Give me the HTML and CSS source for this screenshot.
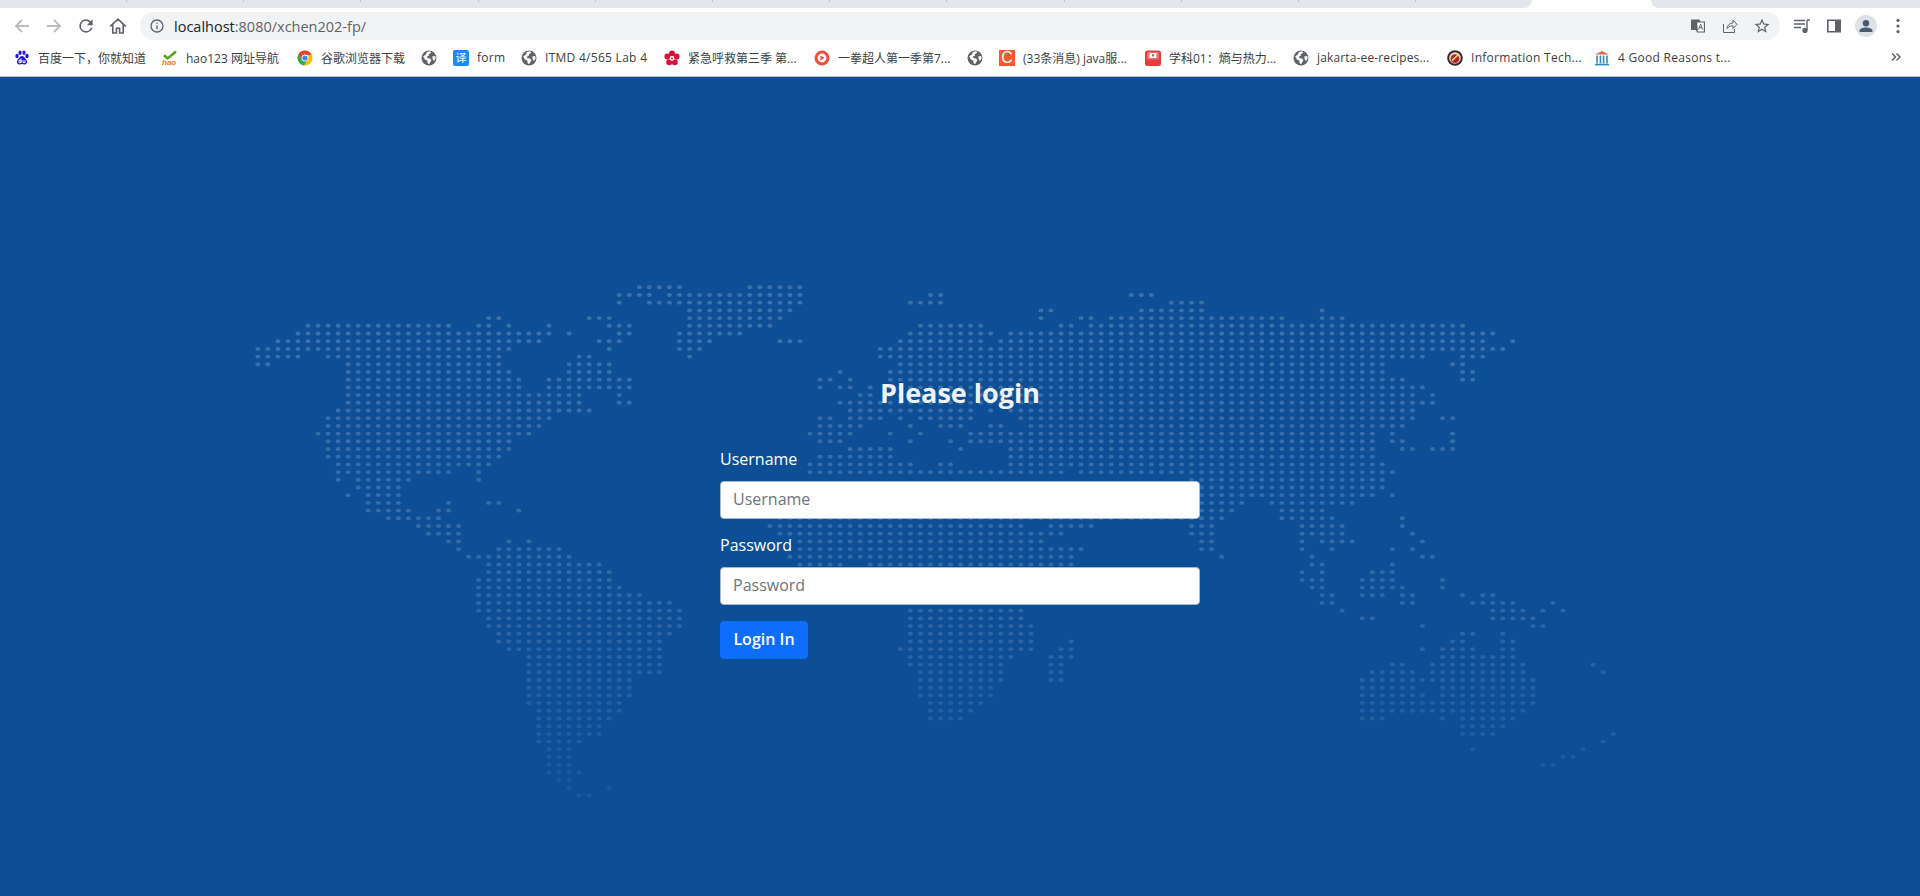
FILE: index.html
```html
<!DOCTYPE html>
<html lang="en">
<head>
<meta charset="utf-8">
<title>Login</title>
<link rel="stylesheet" href="styles.css">
</head>
<body>
<svg class="defs" width="0" height="0" aria-hidden="true">
  <symbol id="globe" viewBox="0 0 16 16">
    <circle cx="8" cy="8" r="7.5" fill="#5f6368"/>
    <path d="M2.2 6.2 5 4.6l.8-2.6 3.4-.8 1 1.6-2.2 1.4-.4 1.8-1.8.4.6 1.6 2.6.6 1.4 1.6-1.2 2-1 1.8-1.4-.4-.6-3-2.4-1.2zM11.2 6.4l3-.4.4 2.4-1.6 2.6-1.2-1.6z" fill="#fff"/>
  </symbol>
</svg>

<header class="chrome">
  <div class="tabstrip">
    <span class="tab tab-first"></span><span class="tab"></span><span class="tab"></span><span class="tab"></span><span class="tab"></span><span class="tab"></span><span class="tab"></span><span class="tab"></span><span class="tab"></span><span class="tab"></span><span class="tab"></span><span class="tab"></span><span class="tab tab-last"></span>
    <span class="tab-active"></span>
    <span class="tab-after"></span>
  </div>

  <div class="toolbar">
    <span class="tbtn"><svg class="i16" viewBox="0 0 16 16"><path class="line-off" d="M15 8H2M8 2 2 8l6 6"/></svg></span>
    <span class="tbtn"><svg class="i16" viewBox="0 0 16 16"><path class="line-off" d="M1 8h13M8 2l6 6-6 6"/></svg></span>
    <span class="tbtn"><svg class="i20" viewBox="0 0 24 24"><path class="fill-icon" d="M17.65 6.35A7.96 7.96 0 0 0 12 4a8 8 0 1 0 7.73 10h-2.08A6 6 0 1 1 12 6c1.66 0 3.14.69 4.22 1.78L13 11h7V4l-2.35 2.35z"/></svg></span>
    <span class="tbtn"><svg class="i18" viewBox="0 0 18 18"><path class="line-icon" d="M1.2 9.4 9 2.2l7.8 7.2M3.8 7.4V16h3.6v-4.8h3.2V16h3.6V7.4"/></svg></span>

    <div class="omnibox">
      <svg class="i16 info" viewBox="0 0 24 24"><path class="fill-icon" d="M11 7h2v2h-2zm0 4h2v6h-2zm1-9a10 10 0 1 0 0 20 10 10 0 0 0 0-20zm0 18a8 8 0 1 1 0-16 8 8 0 0 1 0 16z"/></svg>
      <span class="url"><span class="url-host">localhost</span>:8080/xchen202-fp/</span>
      <span class="omni-actions">
        <span class="tbtn"><svg class="i16" viewBox="0 0 16 16"><path class="fill-icon" d="M1 1.5h8.5l1 2H15v11H7l-1-2.5H1z"/><path class="fill-white" d="M7.2 4.6h6.6v8.8H7.9z"/><path class="line-thin" d="M8.6 11.6 10.6 6l2 5.6M9.3 9.8h2.6M3 5h4M5 3.6V5M3.4 9.4C5 8.6 6 7 6.2 5M3.6 6.4c.6 1.4 1.6 2.4 3 3"/></svg></span>
        <span class="tbtn"><svg class="i16" viewBox="0 0 16 16"><path class="line-thin" d="M1.5 6v8.5h11V11M5 10.6C5.4 7 8 5 11 5V2l4 4.4-4 4.2V7.8C8.5 7.8 6.4 8.6 5 10.6z"/></svg></span>
        <span class="tbtn"><svg class="i18" viewBox="0 0 24 24"><path class="fill-icon" d="M22 9.24l-7.19-.62L12 2 9.19 8.63 2 9.24l5.46 4.73L5.82 21 12 17.27 18.18 21l-1.63-7.03L22 9.24zM12 15.4l-3.76 2.27 1-4.28-3.32-2.88 4.38-.38L12 6.1l1.71 4.04 4.38.38-3.32 2.88 1 4.28L12 15.4z"/></svg></span>
      </span>
    </div>

    <span class="tbtn"><svg class="i16" viewBox="0 0 16 16"><path class="line-icon line-14" d="M0 2.5h11M0 6h11M0 9.5h7M13 2v10"/><path class="line-icon line-14" d="M13 2h3"/><circle class="fill-icon" cx="11" cy="12.4" r="2.6"/></svg></span>
    <span class="tbtn"><svg class="i16" viewBox="0 0 16 16"><path class="fill-icon" d="M1 1.5h14v13H1zM2.6 3v10H9V3z"/></svg></span>
    <span class="tbtn"><span class="avatar"><svg class="i16" viewBox="0 0 16 16"><circle class="fill-slate" cx="8" cy="5.2" r="3.2"/><path class="fill-slate" d="M1.6 14v-1.4C1.6 10.6 5 9.6 8 9.6s6.4 1 6.4 3V14z"/></svg></span></span>
    <span class="tbtn"><svg class="i16" viewBox="0 0 16 16"><circle class="fill-icon" cx="8" cy="2.4" r="1.6"/><circle class="fill-icon" cx="8" cy="8" r="1.6"/><circle class="fill-icon" cx="8" cy="13.6" r="1.6"/></svg></span>
  </div>

  <nav class="bookmarks">
    <a class="bm"><svg class="i16" viewBox="0 0 16 16"><g class="fill-baidu"><ellipse cx="3" cy="6" rx="1.7" ry="2.2"/><ellipse cx="6" cy="2.8" rx="1.6" ry="2.2"/><ellipse cx="10" cy="2.8" rx="1.6" ry="2.2"/><ellipse cx="13" cy="6" rx="1.7" ry="2.2"/><path d="M8 6c2 0 2.6 2 4.2 3.4 1.6 1.6 1 4.8-1.4 5-1.2.1-1.8-.4-2.8-.4s-1.6.5-2.8.4c-2.4-.2-3-3.4-1.4-5C5.4 8 6 6 8 6z"/></g><path class="line-white" d="M5 10.2v2.4H7v-2.4zM7 8.6v4M9 10.2v2.4h2v-2.4"/></svg><span class="bm-text w108">百度一下，你就知道</span></a>
    <a class="bm"><svg class="i16" viewBox="0 0 16 16"><path class="line-green" d="M2 5.2 5.6 8.4 14 1.4"/><text class="hao" x="0" y="15">hao</text></svg><span class="bm-text w95">hao123 网址导航</span></a>
    <a class="bm"><svg class="i16" viewBox="0 0 16 16"><circle cx="8" cy="8" r="7.5" fill="#fbbc04"/><path d="M8 .5a7.5 7.5 0 0 0-6.5 3.75L5 10.5 8 5h6.5A7.5 7.5 0 0 0 8 .5z" fill="#ea4335"/><path d="M1.5 4.25A7.5 7.5 0 0 0 7 15.44L10.7 9.6 5 10.5z" fill="#34a853"/><circle cx="8" cy="8" r="3.4" fill="#fff"/><circle cx="8" cy="8" r="2.6" fill="#4285f4"/></svg><span class="bm-text w84">谷歌浏览器下载</span></a>
    <a class="bm"><svg class="i16"><use href="#globe"/></svg></a>
    <a class="bm"><span class="tile tile-yi">译</span><span class="bm-text latin w28">form</span></a>
    <a class="bm"><svg class="i16"><use href="#globe"/></svg><span class="bm-text latin w103">ITMD 4/565 Lab 4</span></a>
    <a class="bm"><svg class="i16" viewBox="0 0 16 16"><g fill="#dc0f36"><circle cx="8" cy="3.4" r="3"/><circle cx="12.6" cy="6.6" r="3"/><circle cx="10.8" cy="12.2" r="3"/><circle cx="5.2" cy="12.2" r="3"/><circle cx="3.4" cy="6.6" r="3"/></g><circle cx="8" cy="8.4" r="2.3" fill="#fff"/><circle cx="8" cy="8.4" r="1" fill="#dc0f36"/></svg><span class="bm-text w110">紧急呼救第三季 第...</span></a>
    <a class="bm"><svg class="i16" viewBox="0 0 16 16"><circle cx="8" cy="8" r="7.5" fill="#f0513f"/><circle cx="8" cy="8" r="4.4" fill="#fff"/><path d="M6.4 5.6 10.6 8l-4.2 2.4z" fill="#f0513f"/></svg><span class="bm-text w113">一拳超人第一季第7...</span></a>
    <a class="bm"><svg class="i16"><use href="#globe"/></svg></a>
    <a class="bm"><span class="tile tile-c">C</span><span class="bm-text w106">(33条消息) java服...</span></a>
    <a class="bm"><svg class="i16" viewBox="0 0 16 16"><rect y=".5" width="16" height="15.5" rx="2.5" fill="#e3403d"/><rect x="2" y="2" width="12" height="7.6" rx="1" fill="#f3706c"/><rect x="4.6" y="3" width="6.8" height="5" fill="#fff"/><rect x="7" y="4.4" width="2" height="2" fill="#e3403d"/></svg><span class="bm-text w108">学科01：熵与热力...</span></a>
    <a class="bm"><svg class="i16"><use href="#globe"/></svg><span class="bm-text latin-tight w114">jakarta-ee-recipes...</span></a>
    <a class="bm"><svg class="i16" viewBox="0 0 16 16"><circle cx="8" cy="8" r="7.8" fill="#3a2a2a"/><circle cx="8" cy="8" r="5.8" fill="#e6e0d8"/><circle cx="8" cy="8.6" r="4.4" fill="#b5202c"/><path d="M5 10.6 11.4 4.6" stroke="#f4d24c" stroke-width="1.6"/></svg><span class="bm-text latin w107">Information Tech...</span></a>
    <a class="bm"><svg class="i16" viewBox="0 0 16 16"><path d="M1 4.4 8 1l7 3.4z" fill="#e0694a"/><path d="M3 5.4v8M6.4 5.4v8M9.6 5.4v8M13 5.4v8" stroke="#2f8cb8" stroke-width="1.6"/><path d="M1 14.6h14" stroke="#2f8cb8" stroke-width="1.6"/></svg><span class="bm-text latin w110">4 Good Reasons t...</span></a>
    <svg class="more" viewBox="0 0 10 10"><path d="M1 1.5 4.5 5 1 8.5M5.5 1.5 9 5 5.5 8.5"/></svg>
  </nav>
</header>

<main class="stage">
  <svg class="map" viewBox="-7.77 -9.48 1394.4 701.3" preserveAspectRatio="none" aria-hidden="true">
    <defs>
      <linearGradient id="fade" gradientUnits="userSpaceOnUse" x1="0" y1="0" x2="0" y2="660">
        <stop offset="0" stop-color="#fff" stop-opacity=".19"/>
        <stop offset=".55" stop-color="#fff" stop-opacity=".15"/>
        <stop offset=".85" stop-color="#fff" stop-opacity=".09"/>
        <stop offset="1" stop-color="#fff" stop-opacity=".05"/>
      </linearGradient>
    </defs>
    <path class="dots" d="M380 0H421M490 0H541M360 10H391M410 10H541M670 10H681M870 10H891M360 20h1M390 20H541M650 20H681M910 20H941M430 30H531M780 30H791M880 30H941M1060 30h1M230 40H241M330 40H351M430 40H521M780 40h1M820 40H831M850 40H1021M1060 40H1081M50 50H191M220 50H231M250 50h1M290 50h1M350 50H371M430 50H511M660 50H721M800 50H811M830 50H1201M40 60H291M310 60h1M360 60H371M420 60H481M650 60H731M750 60H1231M20 70H281M340 70H361M420 70H451M520 70H541M640 70H721M740 70H1221M1250 70h1M0 80H251M350 80h1M420 80H441M620 80H1241M0 90H41M70 90H241M320 90H331M430 90h1M620 90H1161M1200 90H1221M0 100H11M90 100H241M310 100H351M640 100H1121M1190 100H1201M90 110H251M310 110H351M580 110h1M630 110H1121M1200 110H1211M90 120H261M290 120H371M560 120H571M590 120h1M630 120H1141M1200 120H1211M90 130H261M290 130H371M560 130h1M580 130H591M610 130h1M630 130H1161M90 140H321M360 140h1M600 140H611M630 140H1151M1170 140h1M90 150H321M360 150H371M580 150H1171M80 160H331M590 160H711M730 160h1M750 160H1151M70 170H291M560 170H571M590 170H621M640 170h1M660 170H711M760 170H1151M1180 170H1191M70 180H281M560 180H601M650 180h1M680 180H701M730 180H741M770 180H1141M60 190H271M550 190H591M630 190h1M660 190h1M710 190H1111M1130 190h1M1190 190h1M70 200H251M560 200H581M650 200h1M690 200h1M710 200H1111M1130 200H1141M1190 200h1M70 210H251M590 210H631M700 210h1M750 210H1111M1140 210H1151M1170 210H1191M70 220H241M560 220H631M750 220H1111M80 230H231M550 230H651M680 230H691M750 230H1121M80 240H191M220 240h1M550 240H801M820 240H1131M80 250h1M100 250H151M220 250h1M930 250H1121M100 260H141M930 260H1121M90 270h1M110 270H141M930 270H1111M1130 270h1M110 280H141M190 280h1M230 280H241M940 280H981M1010 280H1091M110 290H151M180 290H191M260 290h1M940 290H971M1020 290H1061M130 300H181M520 300H961M1020 300H1071M1140 300h1M160 310H201M510 310H761M790 310H831M930 310H951M1040 310H1081M1140 310h1M170 320H201M520 320H801M930 320H951M1040 320H1081M1150 320h1M190 330H201M250 330h1M270 330h1M540 330H781M940 330H951M1040 330h1M1060 330H1091M1160 330h1M200 340h1M240 340H301M540 340H821M940 340H951M1040 340h1M1070 340h1M1130 340h1M1150 340h1M210 350H311M530 350H811M960 350h1M1050 350h1M1160 350H1171M230 360H341M540 360H581M610 360H811M1050 360H1061M1130 360h1M230 370H351M1040 370h1M1060 370h1M1110 370H1131M220 380H351M1040 380H1061M1100 380H1131M1180 380h1M220 390H361M1050 390H1061M1100 390H1141M1180 390h1M220 400H381M1060 400H1071M1100 400H1121M1140 400H1151M1200 400h1M1220 400H1231M220 410H411M1060 410H1071M1140 410H1151M1210 410H1251M1290 410h1M220 420H421M650 420H761M1080 420h1M1230 420H1261M1280 420h1M1300 420h1M230 430H421M650 430H761M1100 430H1111M1230 430H1271M230 440H421M650 440H771M1160 440h1M1270 440H1281M240 450H411M650 450H771M1200 450H1211M1240 450h1M240 460H401M650 460H771M810 460h1M1190 460H1201M1240 460H1251M250 470H401M640 470H771M800 470H811M1160 470h1M1180 470H1211M1240 470H1251M270 480H401M650 480H751M790 480H811M1180 480H1251M270 490H401M650 490H741M790 490H801M1130 490H1141M1170 490H1261M1330 490h1M270 500H401M660 500H741M790 500H801M1110 500H1151M1170 500H1261M1340 500h1M270 510H371M660 510H741M790 510H801M1100 510H1271M270 520H371M660 520H731M1100 520H1151M1180 520H1271M270 530H371M660 530H731M1100 530H1161M1180 530H1271M270 540H361M670 540H721M1100 540H1271M280 550H361M670 550H711M1100 550H1261M280 560H351M670 560H701M1100 560H1121M1180 560h1M1200 560H1251M280 570H341M1200 570H1241M280 580H341M1200 580H1231M1350 580h1M280 590H321M1340 590h1M290 600H311M1210 600h1M1320 600h1M290 610H311M1300 610H1311M290 620H311M1280 620H1291M290 630H321M300 640H311M310 650h1M350 650h1M320 660H331"/>
  </svg>

  <form class="login">
    <h3 class="login-title">Please login</h3>
    <div class="field">
      <label class="field-label" for="username">Username</label>
      <input class="field-input" id="username" type="text" placeholder="Username">
    </div>
    <div class="field">
      <label class="field-label" for="password">Password</label>
      <input class="field-input" id="password" type="password" placeholder="Password">
    </div>
    <button class="btn" type="button">Login In</button>
  </form>
</main>
</body>
</html>
```

FILE: styles.css
```css
* { box-sizing: border-box; }

html, body {
  margin: 0;
  height: 100%;
}

body {
  display: flex;
  flex-direction: column;
  overflow: hidden;
  font-family: "Open Sans", "Noto Sans CJK SC", sans-serif;
  background: #0d4f97;
}

.defs { position: absolute; }

.i16 { width: 16px; height: 16px; flex: none; display: block; }
.i18 { width: 18px; height: 18px; flex: none; display: block; }
.i20 { width: 20px; height: 20px; flex: none; display: block; }

.line-off { fill: none; stroke: #b9bbbe; stroke-width: 1.8; }
.line-icon { fill: none; stroke: #5f6368; stroke-width: 1.6; }
.line-14 { stroke-width: 1.4; }
.line-thin { fill: none; stroke: #5f6368; stroke-width: 1; }
.line-white { fill: none; stroke: #fff; stroke-width: 1; }
.line-green { fill: none; stroke: #58a618; stroke-width: 2.6; }
.fill-icon { fill: #5f6368; }
.fill-white { fill: #fff; }
.fill-slate { fill: #4a5a70; }
.fill-baidu { fill: #2319dc; }
.hao { font: italic 700 8px "Liberation Sans", sans-serif; fill: #f07a13; }

/* browser chrome */
.chrome { flex: none; background: #fff; }

.tabstrip {
  display: flex;
  height: 8px;
  background: #fff;
}
.tab {
  flex: none;
  width: 117.2px;
  height: 8px;
  background: linear-gradient(#bfc2c6 0 2px, #e3e6ea 2px);
  background-size: 1px 100%;
  background-repeat: no-repeat;
  background-position: right top;
  background-color: #e3e6ea;
}
.tab-first { width: 127px; }
.tab-last { width: 116px; border-bottom-right-radius: 8px; background-image: none; }
.tab-active { flex: none; width: 119px; }
.tab-after {
  flex: 1;
  background: #e3e6ea;
  border-bottom-left-radius: 8px;
}

.toolbar {
  display: flex;
  align-items: center;
  height: 32px;
  padding: 4px 6px 0;
}
.tbtn {
  flex: none;
  width: 32px;
  height: 28px;
  display: flex;
  align-items: center;
  justify-content: center;
}
.omnibox {
  flex: 1;
  height: 28px;
  margin: 0 6px;
  padding: 0 2px 0 9px;
  display: flex;
  align-items: center;
  gap: 9px;
  background: #f1f3f4;
  border-radius: 14px;
}
.url {
  flex: 1;
  font-size: 14.5px;
  color: #5f6368;
  white-space: nowrap;
}
.url-host { color: #202124; }
.omni-actions { display: flex; }
.avatar {
  width: 22px;
  height: 22px;
  border-radius: 50%;
  background: #dee1e6;
  display: flex;
  align-items: center;
  justify-content: center;
}

.bookmarks {
  display: flex;
  align-items: center;
  height: 37px;
  padding: 0 6px 1px;
  border-bottom: 1px solid #b9c3d0;
  position: relative;
}
.bm {
  flex: none;
  display: flex;
  align-items: center;
  gap: 8px;
  padding: 0 8px;
  font-size: 12px;
  color: #3c4043;
  white-space: nowrap;
}
.bm-text { display: block; }
.latin { letter-spacing: .28px; }
.latin-tight { letter-spacing: .14px; }
.w28 { width: 28px; }
.w84 { width: 84px; }
.w95 { width: 95px; }
.w103 { width: 103px; }
.w106 { width: 106px; }
.w107 { width: 107px; }
.w108 { width: 108px; }
.w110 { width: 110px; }
.w113 { width: 113px; }
.w114 { width: 114px; }

.tile {
  flex: none;
  width: 16px;
  height: 16px;
  display: flex;
  align-items: center;
  justify-content: center;
  color: #fff;
  line-height: 1;
}
.tile-yi { background: #1a8cf5; border-radius: 2px; font-size: 11px; }
.tile-c { background: #fc5531; font: 400 16px "Liberation Sans", sans-serif; }

.more {
  width: 10px;
  height: 10px;
  position: absolute;
  left: 1891px;
  top: 12px;
  fill: none;
  stroke: #5f6368;
  stroke-width: 1.5;
}

/* page */
.stage {
  flex: 1;
  position: relative;
  overflow: hidden;
  background: #0d4f97;
  padding-top: 299px;
}
.map {
  position: absolute;
  left: 250px;
  top: 203px;
  width: 1400px;
  height: 540px;
}
.dots {
  fill: none;
  stroke: url(#fade);
  stroke-width: 5;
  stroke-linecap: round;
  stroke-dasharray: .01 9.99;
}

.login {
  position: relative;
  width: 480px;
  margin: 0 auto;
}
.login-title {
  margin: 0 0 39px;
  font-size: 27px;
  line-height: 34px;
  font-weight: 700;
  text-align: center;
  color: #f0f2f5;
}
.field { margin-bottom: 16px; }
.field-label {
  display: block;
  margin-bottom: 11px;
  font-size: 16px;
  line-height: 21px;
  color: #fff;
}
.field-input {
  display: block;
  width: 100%;
  height: 38px;
  padding: 5px 12px 7px;
  font: 16px/24px "Open Sans", sans-serif;
  color: #212529;
  background: #fff;
  border: 1px solid #a9b8cf;
  border-radius: 4px;
  outline: none;
}
.field-input::placeholder { color: #6c757d; opacity: 1; }
.btn {
  display: block;
  height: 38px;
  width: 88px;
  padding: 0 0 3px;
  font: 600 16px/24px "Open Sans", sans-serif;
  color: #fff;
  background: #0d6efd;
  border: 1px solid #0d6efd;
  border-radius: 4px;
}
```
